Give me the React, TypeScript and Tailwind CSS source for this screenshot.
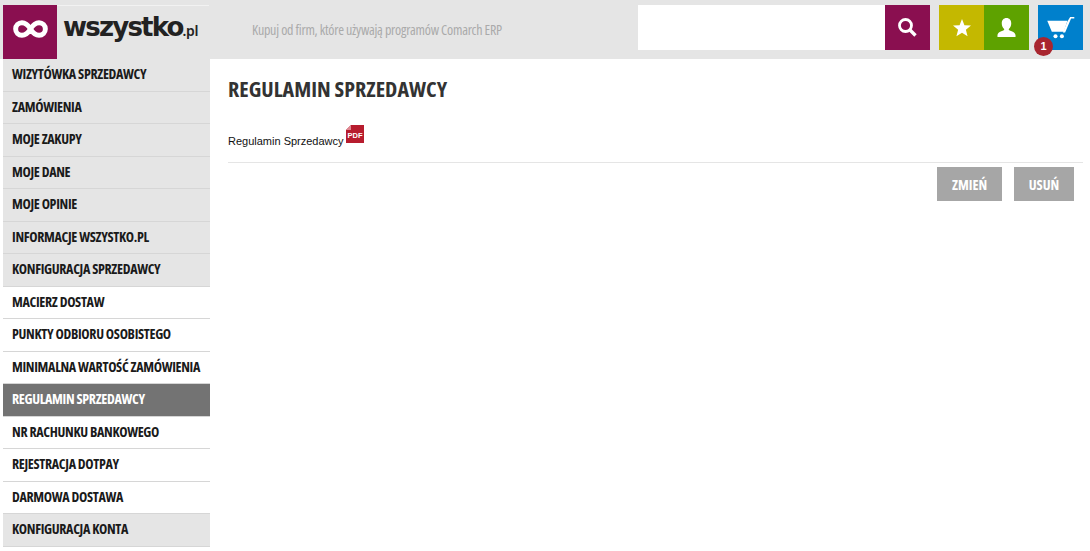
const cond = "font-['Open_Sans',sans-serif] [font-stretch:75%]";

const menu = [
  { label: "WIZYTÓWKA SPRZEDAWCY", bg: "bg-[#e5e5e5]" },
  { label: "ZAMÓWIENIA", bg: "bg-[#e5e5e5]" },
  { label: "MOJE ZAKUPY", bg: "bg-[#e5e5e5]" },
  { label: "MOJE DANE", bg: "bg-[#e5e5e5]" },
  { label: "MOJE OPINIE", bg: "bg-[#e5e5e5]" },
  { label: "INFORMACJE WSZYSTKO.PL", bg: "bg-[#e5e5e5]" },
  { label: "KONFIGURACJA SPRZEDAWCY", bg: "bg-[#e5e5e5]" },
  { label: "MACIERZ DOSTAW", bg: "bg-white" },
  { label: "PUNKTY ODBIORU OSOBISTEGO", bg: "bg-white" },
  { label: "MINIMALNA WARTOŚĆ ZAMÓWIENIA", bg: "bg-white" },
  { label: "REGULAMIN SPRZEDAWCY", bg: "bg-[#737373]", active: true },
  { label: "NR RACHUNKU BANKOWEGO", bg: "bg-white" },
  { label: "REJESTRACJA DOTPAY", bg: "bg-white" },
  { label: "DARMOWA DOSTAWA", bg: "bg-white" },
  { label: "KONFIGURACJA KONTA", bg: "bg-[#e5e5e5]" },
];

function Logo() {
  return (
    <div className="flex h-[54px] w-[206px] self-end">
      <div className="flex h-full w-[54px] items-center justify-center bg-[#8a0f50] pb-[6px]">
        <svg width="37" height="18" viewBox="0 0 38 20" fill="none" stroke="#fff" strokeWidth="5.500">
          <path d="M19 10C16 5 13 3 9.500 3a7 7 0 0 0 0 14C13 17 16 15 19 10c3-5 6-7 9.500-7a7 7 0 0 1 0 14C25 17 22 15 19 10Z" />
        </svg>
      </div>
      <div className="flex flex-1 items-baseline border-t border-[#f2f2f2] pl-[6px] pt-[3px] text-[#222]">
        <span className="font-['DejaVu_Sans',sans-serif] text-[26px] leading-[36px] font-bold tracking-[-1.8px]">wszystko</span>
        <span className="font-['Noto_Sans',sans-serif] text-[14px] font-semibold tracking-[-0.3px]">.pl</span>
      </div>
    </div>
  );
}

function SearchIcon() {
  return (
    <svg width="19" height="19" viewBox="0 0 19 19" fill="none" stroke="#fff">
      <circle cx="7.500" cy="7.500" r="6" strokeWidth="2.800" />
      <path d="M12 12l5.500 5.500" strokeWidth="3.400" />
    </svg>
  );
}

function StarIcon() {
  return (
    <svg width="18" height="18" viewBox="0 0 20 20" fill="#fff">
      <path d="M10 0l2.700 6.900 7.300.4-5.700 4.700 1.900 7.200L10 15.200l-6.200 4 1.900-7.200L0 7.300l7.300-.4Z" />
    </svg>
  );
}

function UserIcon() {
  return (
    <svg width="19" height="19" viewBox="0 0 20 20" fill="#fff">
      <path d="M10 0c3 0 5 2.300 5 5.500 0 2.500-1 4.500-2.300 5.700-.5.500-.4 1.400.2 1.800 1.700 1 6 1.600 6.600 5V20H.5v-2c.6-3.400 4.900-4 6.600-5 .6-.4.7-1.300.2-1.800C6 10 5 8 5 5.500 5 2.300 7 0 10 0Z" />
    </svg>
  );
}

function CartIcon() {
  return (
    <svg width="30" height="22" viewBox="0 0 30 24" fill="#fff">
      <path d="M0 4h22l-4 12H5Z" />
      <path d="M22 5 25 0h4.500v1.500H26L19.500 17H17Z" />
      <circle cx="9" cy="21" r="2.200" />
      <circle cx="16" cy="21" r="2.200" />
    </svg>
  );
}

export default function App() {
  return (
    <div className="min-h-[551px] bg-white">
      <header className="flex h-[59px] bg-[#e5e5e5] pl-[3px]">
        <Logo />
        <div className={`ml-[43px] flex flex-1 items-center pb-[1px] text-[14px] tracking-[-0.25px] text-[#aaa] ${cond}`}>
          Kupuj od firm, które używają programów Comarch ERP
        </div>
        <div className="mt-[5px] mr-[7px] flex h-[45px] self-start">
          <div className="h-full w-[247px] bg-white" />
          <div className="flex w-[45px] items-center justify-center bg-[#8a0f50]">
            <SearchIcon />
          </div>
          <div className="ml-[9px] flex w-[45px] items-center justify-center bg-[#c4b800]">
            <StarIcon />
          </div>
          <div className="flex w-[45px] items-center justify-center bg-[#5ea200]">
            <UserIcon />
          </div>
          <div className="relative ml-[9px] flex w-[45px] items-center justify-center bg-[#0080cc]">
            <CartIcon />
            <span className="absolute left-[-4px] top-[32px] flex h-[19px] w-[19px] items-center justify-center rounded-full bg-[#a8252f] font-['Liberation_Sans',sans-serif] text-[11px] font-bold text-white">
              1
            </span>
          </div>
        </div>
      </header>

      <div className="flex pl-[3px]">
        <nav className="w-[207px] shrink-0">
          {menu.map((item) => (
            <div
              key={item.label}
              className={`flex h-[32.5px] items-center border-b border-[#d6d6d6] pb-[2px] pl-[9px] text-[14px] font-bold tracking-[-0.33px] ${cond} ${item.bg} ${item.active ? "text-white" : "text-[#1a1a1a]"}`}
            >
              {item.label}
            </div>
          ))}
        </nav>

        <main className="flex-1 pl-[18px] pr-[7px]">
          <h1 className={`pt-[14px] text-[22px] leading-[30px] font-bold text-[#333] ${cond}`}>
            REGULAMIN SPRZEDAWCY
          </h1>
          <div className="mt-[22px] flex h-[38px] items-start border-b border-[#e5e5e5] font-['Liberation_Sans',sans-serif] text-[11px] text-[#111]">
            <span className="mt-[6px] leading-[20px]">Regulamin Sprzedawcy</span>
            <svg className="ml-[2px]" width="18" height="18" viewBox="0 0 18 18">
              <path d="M5 0h13v18H0V5Z" fill="#b71c2e" />
              <path d="M0 5h5V0Z" fill="#e08a94" />
              <text x="9" y="12.500" textAnchor="middle" fontSize="7.500" fontWeight="700" fontFamily="Liberation Sans, sans-serif" fill="#fff">
                PDF
              </text>
            </svg>
          </div>
          <div className="mt-[4px] flex justify-end gap-[12px] pr-[9px]">
            <button className={`h-[34px] w-[65px] bg-[#a6a6a6] text-[14px] font-bold text-white ${cond}`}>ZMIEŃ</button>
            <button className={`h-[34px] w-[60px] bg-[#a6a6a6] text-[14px] font-bold text-white ${cond}`}>USUŃ</button>
          </div>
        </main>
      </div>
    </div>
  );
}
